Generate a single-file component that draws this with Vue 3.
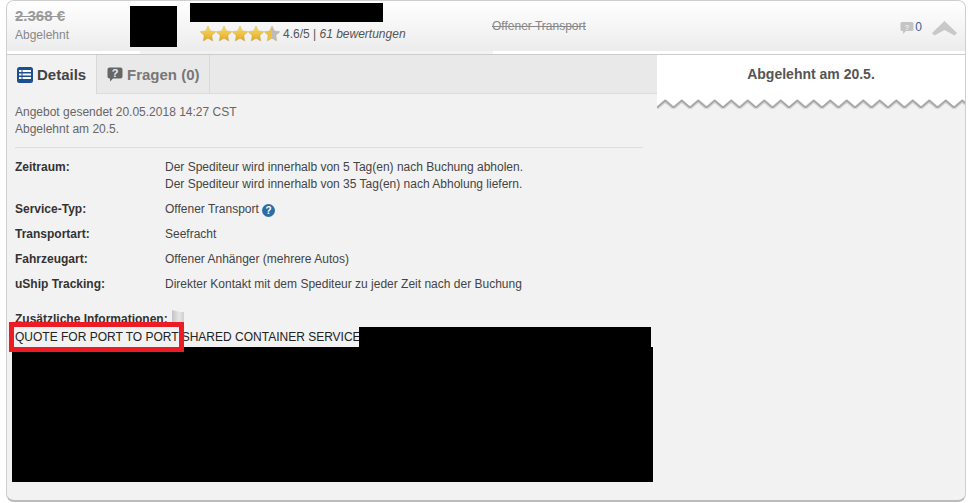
<script setup>
const rows = [
  { label: 'Service-Typ:', text: 'Offener Transport', help: true },
  { label: 'Transportart:', text: 'Seefracht' },
  { label: 'Fahrzeugart:', text: 'Offener Anhänger (mehrere Autos)' },
  { label: 'uShip Tracking:', text: 'Direkter Kontakt mit dem Spediteur zu jeder Zeit nach der Buchung' },
]
const starPath = 'M8 0l2.300 5 5.500.7-4 3.800 1 5.500L8 12.300 3.200 15l1-5.500-4-3.800 5.500-.7z'
</script>

<template>
  <div class="page">
    <div class="card">
      <header class="head">
        <div class="price">
          <s class="amount">2.368 €</s>
          <span class="status">Abgelehnt</span>
        </div>
        <div class="thumb"></div>
        <div class="who">
          <div class="name"></div>
          <div class="rating">
            <svg class="stars" width="80" height="16" viewBox="0 0 80 16">
              <defs>
                <linearGradient id="gold" x1="0" y1="0" x2="0" y2="1">
                  <stop offset="0" stop-color="#fbe36a" />
                  <stop offset="1" stop-color="#e0a526" />
                </linearGradient>
                <linearGradient id="part" x1="0" y1="0" x2="1" y2="0">
                  <stop offset="0.5" stop-color="#eec23e" />
                  <stop offset="0.5" stop-color="#bcbcbc" />
                </linearGradient>
              </defs>
              <path v-for="i in 4" :key="i" :d="starPath" :transform="`translate(${(i - 1) * 16} 0)`" fill="url(#gold)" stroke="#c9a24a" stroke-width=".4" />
              <path :d="starPath" transform="translate(64 0)" fill="url(#part)" stroke="#b5a77c" stroke-width=".4" />
            </svg>
            <span class="score">4.6/5 | <em>61 bewertungen</em></span>
          </div>
        </div>
        <s class="service">Offener Transport</s>
        <div class="tools">
          <svg width="14" height="13" viewBox="0 0 14 13">
            <path d="M2 1h10a1.500 1.500 0 0 1 1.500 1.500v6A1.500 1.500 0 0 1 12 10H6l-3 3v-3H2A1.500 1.500 0 0 1 .5 8.500v-6A1.500 1.500 0 0 1 2 1z" fill="#c4c4c4" />
            <text x="7" y="8.500" text-anchor="middle" class="q-small">?</text>
          </svg>
          <span class="count">0</span>
          <svg class="chevron" width="25" height="16" viewBox="0 0 25 16">
            <path d="M0 13L12.500 1 25 13 22.500 15.500 12.500 10 2.500 15.500z" fill="#c8c8c8" />
          </svg>
        </div>
      </header>
      <div class="rule"></div>

      <div class="main">
        <section class="left">
          <nav class="tabs">
            <div class="tab active">
              <svg width="16" height="16" viewBox="0 0 16 16">
                <rect width="16" height="16" rx="2.500" fill="#1b4f8f" />
                <path d="M2 3h2.500v2H2zM5.500 3H14v2H5.500zM2 6.500h2.500v2H2zM5.500 6.500H14v2H5.500zM2 10h2.500v2H2zM5.500 10H14v2H5.500z" fill="#fff" />
              </svg>
              Details
            </div>
            <div class="tab">
              <svg width="16" height="16" viewBox="0 0 16 16">
                <path d="M2.500 1.500h11A2 2 0 0 1 15.500 3.500v7a2 2 0 0 1-2 2H6l-3 3v-3h-.500a2 2 0 0 1-2-2v-7a2 2 0 0 1 2-2z" fill="#666" />
                <text x="8" y="10.500" text-anchor="middle" class="q-big">?</text>
              </svg>
              Fragen (0)
            </div>
          </nav>

          <div class="body">
            <p class="meta">Angebot gesendet 20.05.2018 14:27 CST<br />Abgelehnt am 20.5.</p>
            <div class="sep"></div>
            <div class="row first">
              <b class="label">Zeitraum:</b>
              <div class="value">
                Der Spediteur wird innerhalb von 5 Tag(en) nach Buchung abholen.<br />
                Der Spediteur wird innerhalb von 35 Tag(en) nach Abholung liefern.
              </div>
            </div>
            <div v-for="r in rows" :key="r.label" class="row">
              <b class="label">{{ r.label }}</b>
              <div class="value">
                {{ r.text }}
                <span v-if="r.help" class="help">?</span>
              </div>
            </div>
            <div class="extra">
              <b class="label-inline">Zusätzliche Informationen:</b>
              <svg class="flag" width="14" height="17" viewBox="0 0 14 17">
                <defs>
                  <linearGradient id="flagfill" x1="0" y1="0" x2="1" y2="0">
                    <stop offset="0" stop-color="#c4c4c4" />
                    <stop offset="0.6" stop-color="#e6e6e6" />
                    <stop offset="1" stop-color="#cfcfcf" />
                  </linearGradient>
                </defs>
                <path d="M1 0l8 2h4v13H2v2H1z" fill="url(#flagfill)" />
              </svg>
            </div>
            <div class="note">QUOTE FOR PORT TO PORT SHARED CONTAINER SERVICE</div>
          </div>
        </section>

        <aside class="right">
          <div class="notice">Abgelehnt am 20.5.</div>
          <svg class="zigzag" width="100%" height="13">
            <defs>
              <pattern id="teeth" width="16.500" height="13" patternUnits="userSpaceOnUse">
                <path d="M0 0h16.500v9L8.250 2 0 9z" fill="#fff" />
                <path d="M0 10L8.250 3 16.500 10" fill="none" stroke="#ccc" stroke-width="3" />
                <path d="M0 9.500L8.250 2.500 16.500 9.500" fill="none" stroke="#999" stroke-width="1" />
              </pattern>
            </defs>
            <rect width="100%" height="13" fill="url(#teeth)" />
          </svg>
        </aside>
      </div>

      <div class="redact r1"></div>
      <div class="redact r2"></div>
      <div class="mark"></div>
    </div>
  </div>
</template>

<style>
html, body { margin: 0; background: #fff; }
</style>

<style scoped>
.page {
  width: 971px;
  height: 503px;
  overflow: hidden;
  font-family: "Liberation Sans", Arial, sans-serif;
  font-size: 12px;
  color: #444;
  background: #fff;
}
.card {
  position: relative;
  box-sizing: border-box;
  width: 960px;
  height: 502px;
  margin-left: 6px;
  background: #f2f2f2;
  border: 1px solid #cfcfcf;
  border-bottom: 2px solid #bbb;
  border-radius: 8px;
  display: flex;
  flex-direction: column;
  overflow: hidden;
}
.head {
  height: 50px;
  flex: none;
  display: flex;
  background: linear-gradient(#fff, #ececec);
}
.price {
  width: 123px;
  padding: 7px 0 0 8px;
  box-sizing: border-box;
  display: flex;
  flex-direction: column;
  gap: 3px;
}
.amount {
  font-size: 15px;
  font-weight: bold;
  color: #999;
  line-height: 16px;
}
.status {
  font-size: 12px;
  color: #888;
  line-height: 16px;
}
.thumb {
  width: 47px;
  height: 41px;
  margin-top: 5px;
  background: #000;
}
.who {
  width: 302px;
  margin-left: 13px;
  padding-top: 2px;
}
.name {
  width: 193px;
  height: 19px;
  background: #000;
}
.rating {
  display: flex;
  align-items: center;
  margin: 4px 0 0 10px;
}
.stars { flex: none; }
.score {
  margin-left: 3px;
  color: #555;
  font-size: 12px;
}
.service {
  width: 380px;
  margin-top: 17px;
  color: #888;
  line-height: 16px;
}
.tools {
  margin-left: auto;
  padding: 20px 8px 0 0;
  display: flex;
  align-items: flex-start;
}
.count {
  margin-left: 1px;
  color: #3a5f96;
  line-height: 12px;
}
.chevron {
  margin: -1px 0 0 10px;
}
.q-small {
  font: bold 8px "Liberation Sans", sans-serif;
  fill: #eee;
}
.q-big {
  font: bold 11px "Liberation Sans", sans-serif;
  fill: #eee;
}
.rule {
  flex: none;
  height: 3px;
  background: linear-gradient(to right, #fff 133px, transparent 133px, transparent 486px, #fff 486px);
  border-bottom: 1px solid #ccc;
}
.main {
  flex: 1;
  display: flex;
  min-height: 0;
}
.left {
  width: 650px;
  flex: none;
}
.tabs {
  height: 38px;
  display: flex;
  background: #e9e9e9;
  border-bottom: 1px solid #dcdcdc;
}
.tab {
  display: flex;
  align-items: center;
  gap: 4px;
  padding: 0 9px 0 10px;
  font-size: 15px;
  font-weight: bold;
  color: #777;
  border-right: 1px solid #d8d8d8;
}
.tab.active {
  width: 90px;
  box-sizing: border-box;
  color: #444;
  background: #f2f2f2;
  height: 39px;
}
.body {
  padding: 10px 14px 0 8px;
  box-sizing: border-box;
}
.meta {
  margin: 0;
  line-height: 17px;
  color: #666;
}
.sep {
  height: 1px;
  margin: 9px 0 0;
  background: #ddd;
}
.row {
  display: flex;
  margin-top: 8px;
  line-height: 17px;
  color: #444;
}
.row.first { margin-top: 11px; }
.label {
  width: 150px;
  flex: none;
  color: #333;
}
.help {
  display: inline-block;
  width: 13px;
  height: 13px;
  margin-left: 0;
  border-radius: 50%;
  background: #2e6da4;
  color: #fff;
  font-size: 10px;
  font-weight: bold;
  line-height: 13px;
  text-align: center;
  vertical-align: -1px;
}
.extra {
  display: flex;
  align-items: flex-start;
  margin-top: 18px;
  height: 17px;
  line-height: 17px;
  color: #333;
}
.flag { margin-left: 3px; margin-top: -1px; }
.note {
  line-height: 18px;
  color: #222;
}
.right {
  width: 308px;
  flex: none;
}
.notice {
  height: 43px;
  background: #fff;
  text-align: center;
  font-size: 14px;
  font-weight: bold;
  color: #555;
  line-height: 39px;
}
.zigzag {
  display: block;
}
.redact {
  position: absolute;
  background: #000;
}
.r1 {
  left: 352px;
  top: 326px;
  width: 292px;
  height: 21px;
}
.r2 {
  left: 5px;
  top: 346px;
  width: 641px;
  height: 135px;
}
.mark {
  position: absolute;
  left: 2px;
  top: 321px;
  width: 175px;
  height: 30px;
  box-sizing: border-box;
  border: 5px solid #ed1c24;
}
</style>
